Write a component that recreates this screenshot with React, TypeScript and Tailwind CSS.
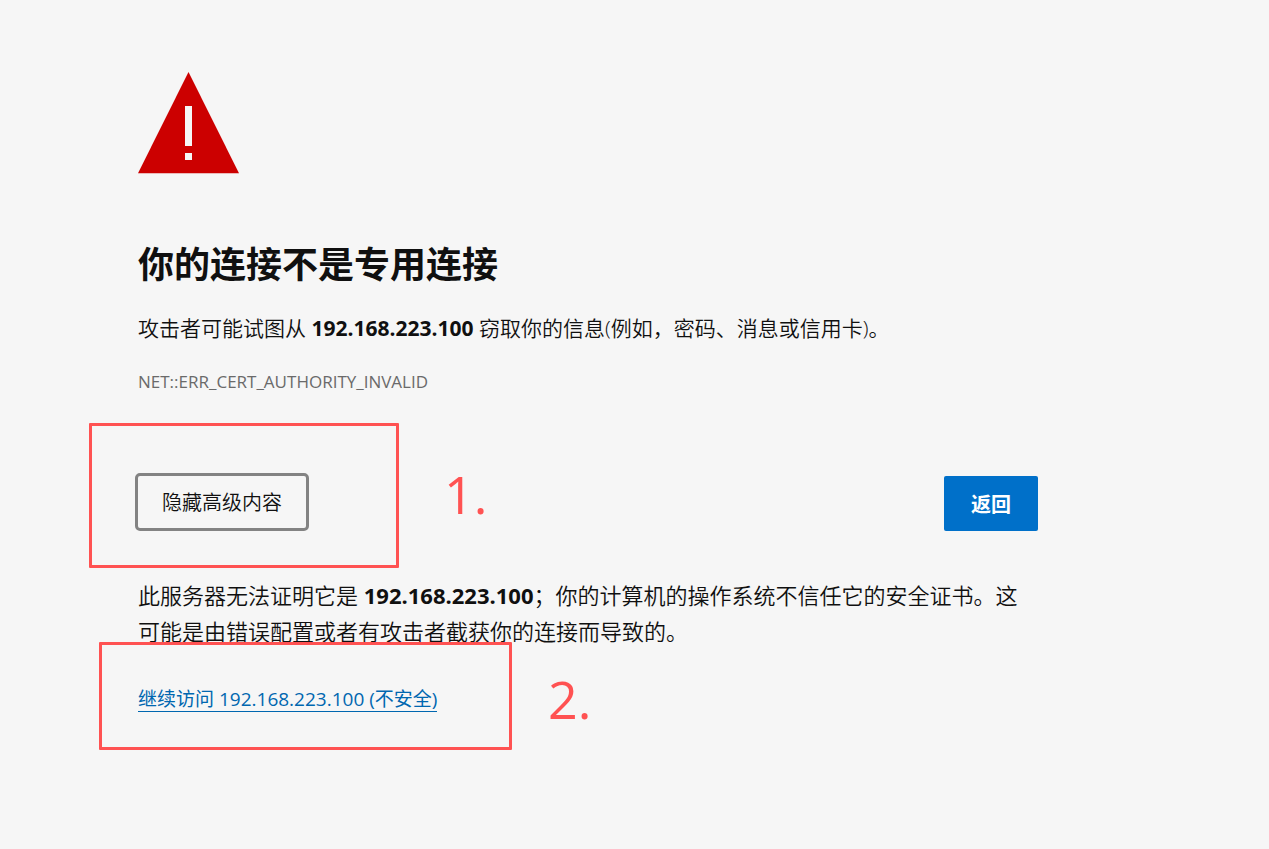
import { useEffect, useState } from "react";

const host = "192.168.223.100";

const WarningIcon = () => (
  <svg
    viewBox="0 0 102 102"
    className="block w-[102px] h-[102px]"
    role="img"
    aria-label="警告"
  >
    <path d="M50.5 0L101 101.3H0z" fill="#cc0000" />
    <path d="M47 34h7v40h-7zM47 81h7v7h-7z" fill="#f6f6f6" />
  </svg>
);

export default function App() {
  const [showDetails, setShowDetails] = useState(true);

  useEffect(() => {
    document.title = "隐私错误";
  }, []);

  return (
    <div
      lang="zh-CN"
      className="min-h-screen bg-[#f6f6f6] text-[#101010] pt-[72px] pb-10 pl-[138px] pr-10 font-['Open_Sans','Noto_Sans_CJK_SC',sans-serif]"
    >
      <main className="w-full max-w-[900px]">
        <WarningIcon />
        <h1 className="mt-[66px] text-4xl leading-[50px] font-bold">
          你的连接不是专用连接
        </h1>
        <p className="mt-[22px] text-[21px] leading-8 font-[350]">
          攻击者可能试图从 <strong className="font-bold">{host}</strong>{" "}
          窃取你的信息(例如，密码、消息或信用卡)。
        </p>
        <p className="mt-[26px] text-[17px] leading-6 text-[#6a6a6a]">
          NET::ERR_CERT_AUTHORITY_INVALID
        </p>

        <div className="flex items-start justify-between mt-[82px]">
          <div className="relative">
            <button
              type="button"
              onClick={() => setShowDetails(!showDetails)}
              className="h-[52px] px-6 pt-0.5 text-xl font-[350] rounded-xs cursor-pointer outline-3 outline-[#838383]"
            >
              隐藏高级内容
            </button>
            {/* step 1 marker */}
            <div className="absolute -left-[49px] -top-[53px] w-[310px] h-[145px] border-3 border-[#ff5252] rounded-[1px] pointer-events-none" />
            <span className="absolute left-[306px] -top-3.5 text-[52px] leading-[64px] text-[#ff5252] pointer-events-none">
              1.
            </span>
          </div>
          <button
            type="button"
            className="h-[55px] px-[27px] pt-0.5 text-xl font-bold text-white bg-[#0070c9] rounded-xs cursor-pointer"
          >
            返回
          </button>
        </div>

        {showDetails && (
          <div className="mt-[46px]">
            <p className="text-[22px] leading-9 font-[350]">
              此服务器无法证明它是 <strong className="font-bold">{host}</strong>
              ；你的计算机的操作系统不信任它的安全证书。这可能是由错误配置或者有攻击者截获你的连接而导致的。
            </p>
            <div className="relative mt-[38px] w-max">
              <a
                href="#proceed"
                className="block text-[19px] leading-6 text-[#0067b0] border-b border-[#0067b0]"
              >
                继续访问 {host} (不安全)
              </a>
              {/* step 2 marker */}
              <div className="absolute -left-[39px] -top-[45px] w-[413px] h-[108px] border-3 border-[#ff5252] rounded-[1px] pointer-events-none" />
              <span className="absolute left-[410px] -top-5 text-[52px] leading-[64px] text-[#ff5252] pointer-events-none">
                2.
              </span>
            </div>
          </div>
        )}
      </main>
    </div>
  );
}
